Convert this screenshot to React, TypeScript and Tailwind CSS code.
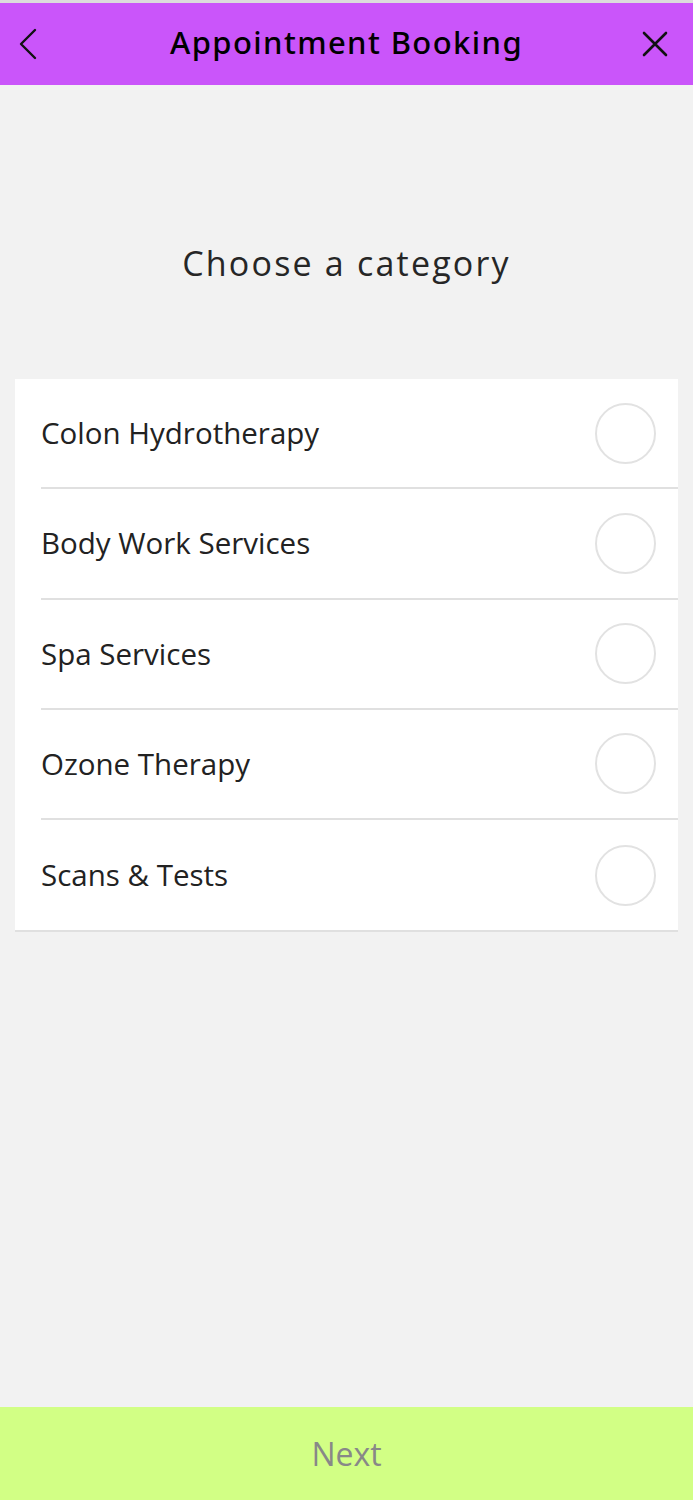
import React from "react";

const items = ["Colon Hydrotherapy", "Body Work Services", "Spa Services", "Ozone Therapy", "Scans & Tests"];

export default function App() {
  return (
    <div className="w-[693px] h-[1500px] bg-[#f2f2f2] flex flex-col" style={{ fontFamily: '"Open Sans", sans-serif' }}>
      <div className="h-[3px] bg-[#dcdcdc]" />
      <header className="h-[82px] bg-[#ca55fa] grid grid-cols-[1fr_auto_1fr] items-center px-[18px]">
        <svg width="20" height="32" viewBox="0 0 20 32">
          <path d="M17 2 L3 16 L17 30" fill="none" stroke="#111" strokeWidth="2.4" strokeLinecap="round" strokeLinejoin="round" />
        </svg>
        <h1 className="text-[31px] font-medium text-black tracking-[1.4px] mb-[4px]" style={{ fontFamily: '"Noto Sans", sans-serif' }}>
          Appointment Booking
        </h1>
        <div className="flex justify-end">
          <svg width="28" height="28" viewBox="0 0 28 28" className="mr-[6px]">
            <path d="M3 3 L25 25 M25 3 L3 25" fill="none" stroke="#111" strokeWidth="2.6" strokeLinecap="round" />
          </svg>
        </div>
      </header>
      <div className="h-[138px]" />
      <h2 className="text-center text-[34px] text-[#262626] tracking-[2.2px] leading-[80px]">Choose a category</h2>
      <div className="h-[76px]" />
      <div className="mx-[15px] bg-white border-b-2 border-[#e0e0e0]">
        {items.map((t, i) => (
          <div key={t} className={`ml-[26px] h-[110.25px] flex items-center justify-between pr-[22px] ${i < items.length - 1 ? "border-b-2 border-[#e0e0e0]" : ""}`}>
            <span className="text-[29.5px] text-[#222]">{t}</span>
            <div className="w-[61px] h-[61px] rounded-full border-2 border-[#e2e2e2]" />
          </div>
        ))}
      </div>
      <div className="flex-1" />
      <button className="h-[93px] bg-[#d2ff85] text-[#888] text-[32px] flex items-center justify-center">Next</button>
    </div>
  );
}
